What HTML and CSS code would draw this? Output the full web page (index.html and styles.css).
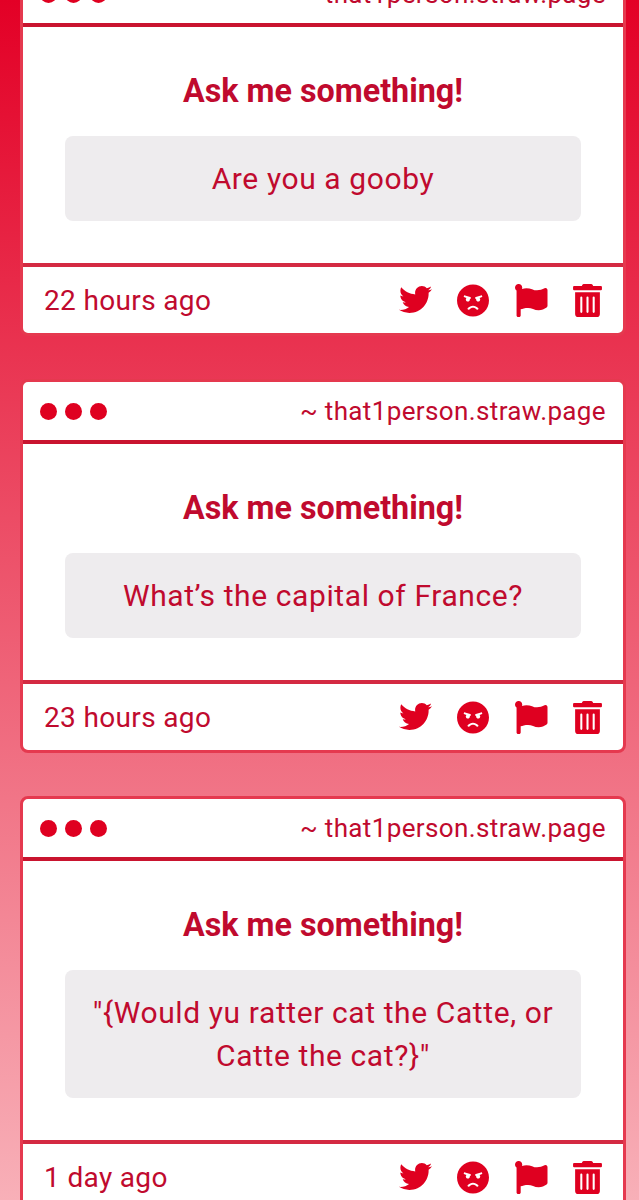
FILE: index.html
```html
<!DOCTYPE html>
<html lang="en">
<head>
<meta charset="utf-8">
<title>Straw page</title>
<link rel="stylesheet" href="styles.css">
</head>
<body>
<svg class="sprite" aria-hidden="true">
  <symbol id="i-twitter" viewBox="0 0 512 512"><path d="M459.37 151.716c.325 4.548.325 9.097.325 13.645 0 138.72-105.583 298.558-298.558 298.558-59.452 0-114.68-17.219-161.137-47.106 8.447.974 16.568 1.299 25.34 1.299 49.055 0 94.213-16.568 130.274-44.832-46.132-.975-84.792-31.188-98.112-72.772 6.498.974 12.995 1.624 19.818 1.624 9.421 0 18.843-1.3 27.614-3.573-48.081-9.747-84.143-51.98-84.143-102.985v-1.299c13.969 7.797 30.214 12.67 47.431 13.319-28.264-18.843-46.781-51.005-46.781-87.391 0-19.492 5.197-37.36 14.294-52.954 51.655 63.675 129.3 105.258 216.365 109.807-1.624-7.797-2.599-15.918-2.599-24.04 0-57.828 46.782-104.934 104.934-104.934 30.213 0 57.502 12.67 76.67 33.137 23.715-4.548 46.456-13.32 66.599-25.34-7.798 24.366-24.366 44.833-46.132 57.827 21.117-2.273 41.584-8.122 60.426-16.243-14.292 20.791-32.161 39.308-52.628 54.253z"/></symbol>
  <symbol id="i-angry" viewBox="0 0 496 512"><path d="M248 8C111 8 0 119 0 256s111 248 248 248 248-111 248-248S385 8 248 8zM136 240c0-9.3 4.1-17.5 10.5-23.4l-31-9.3c-8.5-2.5-13.3-11.5-10.7-19.9 2.5-8.5 11.4-13.2 19.9-10.7l80 24c8.5 2.5 13.3 11.5 10.7 19.9-2.1 6.9-8.4 11.4-15.3 11.4-.5 0-1.1-.2-1.7-.2.7 2.7 1.7 5.3 1.7 8.2 0 17.7-14.3 32-32 32S136 257.7 136 240zm168 154.2c-27.8-33.4-84.2-33.4-112.1 0-13.5 16.3-38.2-4.2-24.6-20.5 20-24 49.4-37.8 80.6-37.8s60.6 13.8 80.6 37.8c13.8 16.5-11.1 36.6-24.5 20.5zm76.6-186.9l-31 9.3c6.3 5.8 10.5 14.1 10.5 23.4 0 17.7-14.3 32-32 32s-32-14.3-32-32c0-2.9.9-5.5 1.7-8.2-.6.1-1.1.2-1.7.2-6.9 0-13.2-4.5-15.3-11.4-2.5-8.5 2.3-17.4 10.7-19.9l80-24c8.4-2.5 17.4 2.3 19.9 10.7 2.5 8.5-2.3 17.4-10.8 19.9z"/></symbol>
  <symbol id="i-flag" viewBox="0 0 512 512"><path d="M349.565 98.783C295.978 98.783 251.721 64 184.348 64c-24.955 0-47.309 4.384-68.045 12.013a55.947 55.947 0 0 0 3.586-23.562C118.117 24.015 94.806 1.206 66.338.048 34.345-1.254 8 24.296 8 56c0 19.026 9.497 35.825 24 45.945V488c0 13.255 10.745 24 24 24h16c13.255 0 24-10.745 24-24v-94.4c28.311-12.064 63.582-22.122 114.435-22.122 53.588 0 97.844 34.783 165.217 34.783 48.169 0 86.667-16.294 122.505-40.858C506.84 359.452 512 349.571 512 339.045v-243.1c0-23.393-24.269-38.87-45.485-29.016-34.338 15.948-76.454 31.854-116.95 31.854z"/></symbol>
  <symbol id="i-trash" viewBox="0 0 448 512"><path d="M32 464a48 48 0 0 0 48 48h288a48 48 0 0 0 48-48V128H32zm272-256a16 16 0 0 1 32 0v224a16 16 0 0 1-32 0zm-96 0a16 16 0 0 1 32 0v224a16 16 0 0 1-32 0zm-96 0a16 16 0 0 1 32 0v224a16 16 0 0 1-32 0zM432 32H312l-9.4-18.7A24 24 0 0 0 281.1 0H166.8a23.72 23.72 0 0 0-21.4 13.3L136 32H16A16 16 0 0 0 0 48v32a16 16 0 0 0 16 16h416a16 16 0 0 0 16-16V48a16 16 0 0 0-16-16z"/></symbol>
</svg>
<main class="feed">
  <article class="card">
    <header class="bar">
      <div class="dots"><span class="dot"></span><span class="dot"></span><span class="dot"></span></div>
      <div class="site">~ that1person.straw.page</div>
    </header>
    <section class="content">
      <h2 class="title">Ask me something!</h2>
      <p class="question">Are you a gooby</p>
    </section>
    <footer class="meta">
      <time class="age">22 hours ago</time>
      <div class="actions">
        <svg class="icon icon-twitter"><use href="#i-twitter"/></svg>
        <svg class="icon icon-angry"><use href="#i-angry"/></svg>
        <svg class="icon icon-flag"><use href="#i-flag"/></svg>
        <svg class="icon icon-trash"><use href="#i-trash"/></svg>
      </div>
    </footer>
  </article>
  <article class="card">
    <header class="bar">
      <div class="dots"><span class="dot"></span><span class="dot"></span><span class="dot"></span></div>
      <div class="site">~ that1person.straw.page</div>
    </header>
    <section class="content">
      <h2 class="title">Ask me something!</h2>
      <p class="question">What’s the capital of France?</p>
    </section>
    <footer class="meta">
      <time class="age">23 hours ago</time>
      <div class="actions">
        <svg class="icon icon-twitter"><use href="#i-twitter"/></svg>
        <svg class="icon icon-angry"><use href="#i-angry"/></svg>
        <svg class="icon icon-flag"><use href="#i-flag"/></svg>
        <svg class="icon icon-trash"><use href="#i-trash"/></svg>
      </div>
    </footer>
  </article>
  <article class="card">
    <header class="bar">
      <div class="dots"><span class="dot"></span><span class="dot"></span><span class="dot"></span></div>
      <div class="site">~ that1person.straw.page</div>
    </header>
    <section class="content">
      <h2 class="title">Ask me something!</h2>
      <p class="question">"{Would yu ratter cat the Catte, or Catte the cat?}"</p>
    </section>
    <footer class="meta">
      <time class="age">1 day ago</time>
      <div class="actions">
        <svg class="icon icon-twitter"><use href="#i-twitter"/></svg>
        <svg class="icon icon-angry"><use href="#i-angry"/></svg>
        <svg class="icon icon-flag"><use href="#i-flag"/></svg>
        <svg class="icon icon-trash"><use href="#i-trash"/></svg>
      </div>
    </footer>
  </article>
</main>
</body>
</html>
```
FILE: styles.css
```css
html, body {
  margin: 0;
  padding: 0;
  height: 1200px;
  overflow: hidden;
}

body {
  background: linear-gradient(180deg, #e30026 0%, #f8b0b8 100%);
  font-family: Roboto, "Liberation Sans", sans-serif;
  color: #c00a2e;
}

.sprite {
  display: none;
}

.feed {
  display: flex;
  flex-direction: column;
  gap: 43px;
  margin: -38px 13px 0 20px;
}

.card {
  border: 3px solid #e5394f;
  border-radius: 8px;
  background: #fff;
}

.bar {
  display: flex;
  align-items: center;
  justify-content: space-between;
  height: 58px;
  padding: 0 17px 0 17px;
  border-bottom: 4px solid #c9142f;
}

.dots {
  display: flex;
  gap: 8px;
}

.dot {
  width: 17px;
  height: 17px;
  border-radius: 50%;
  background: #df0020;
}

.site {
  font-size: 26px;
  letter-spacing: 0.37px;
}

.content {
  padding: 44px 42px 42px;
  border-bottom: 4px solid #d42a42;
}

.title {
  margin: 0 0 25px;
  font-size: 32.3px;
  line-height: 40px;
  font-weight: 700;
  text-align: center;
}

.question {
  margin: 0;
  padding: 21px 20px;
  border-radius: 8px;
  background: #eeecee;
  font-size: 30px;
  line-height: 43px;
  letter-spacing: 0.6px;
  text-align: center;
}

.meta {
  display: flex;
  align-items: center;
  justify-content: space-between;
  height: 66px;
  padding: 0 21px 0 21px;
}

.age {
  font-size: 28px;
  letter-spacing: 0.35px;
}

.actions {
  display: flex;
  align-items: center;
  gap: 25px;
}

.icon {
  display: block;
  fill: #df0020;
  height: 33px;
}

.icon-twitter {
  width: 33px;
  margin-top: -2px;
}

.icon-angry {
  width: 32px;
}

.icon-flag {
  width: 34px;
}

.icon-trash {
  width: 29px;
}
```
